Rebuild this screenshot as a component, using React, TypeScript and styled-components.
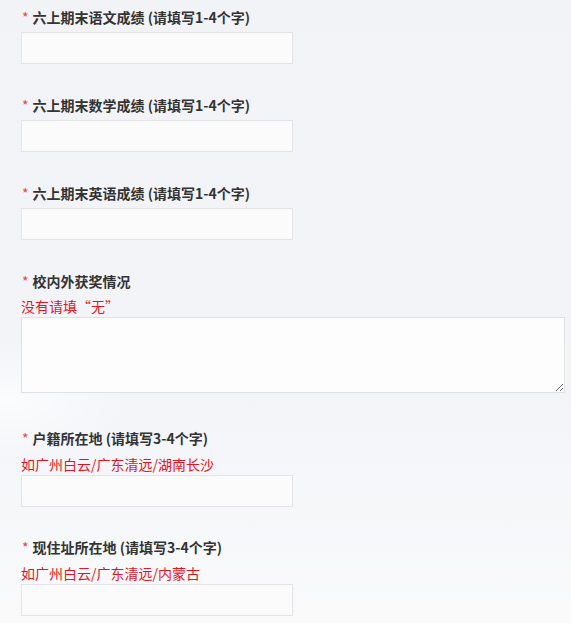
import React from "react";
import styled, { createGlobalStyle } from "styled-components";

const Global = createGlobalStyle`
  html, body { margin: 0; padding: 0; }
  body {
    font-family: "Noto Sans CJK SC", "Noto Sans", sans-serif;
    background: #f2f4f8;
  }
`;

const Page = styled.div`
  min-height: 623px;
  box-sizing: border-box;
  padding: 7px 0 20px 21px;
  background:
    radial-gradient(ellipse 120px 60px at 10px 400px, rgba(255,255,255,0.7), rgba(255,255,255,0) 100%),
    linear-gradient(180deg, #f1f3f7 0%, #f2f4f8 60%, #f7f8fa 85%, #fafafb 100%);
`;

const Field = styled.div<{ $gap: number }>`
  display: flex;
  flex-direction: column;
  align-items: flex-start;
  margin-bottom: ${(p) => p.$gap}px;
`;

const Label = styled.div<{ $mb: number }>`
  font-size: 14px;
  line-height: 20px;
  font-weight: 700;
  color: #333;
  margin-bottom: ${(p) => p.$mb}px;
  white-space: nowrap;
`;

const Star = styled.span`
  color: #e2474c;
  font-weight: 400;
  margin-right: 4px;
  margin-left: 1px;
`;

const Hint = styled.div`
  font-size: 14px;
  line-height: 22px;
  color: #e3141f;
  white-space: nowrap;
`;

const Input = styled.input`
  display: block;
  box-sizing: border-box;
  width: 272px;
  height: 32px;
  margin: 0;
  border: 1px solid #e4e4e6;
  background: #fbfbfc;
  outline: none;
  padding: 0 8px;
  font: inherit;
`;

const TextArea = styled.textarea`
  display: block;
  box-sizing: border-box;
  width: 544px;
  height: 76px;
  margin: 0;
  border: 1px solid #e1e1e3;
  background: #fdfdfd;
  outline: none;
  padding: 6px 8px;
  font: inherit;
`;

type F = {
  label: string;
  hint?: string;
  area?: boolean;
  mb: number;
  gap: number;
};

const fields: F[] = [
  { label: "六上期末语文成绩 (请填写1-4个字)", mb: 5, gap: 31 },
  { label: "六上期末数学成绩 (请填写1-4个字)", mb: 5, gap: 31 },
  { label: "六上期末英语成绩 (请填写1-4个字)", mb: 5, gap: 31 },
  { label: "校内外获奖情况", hint: "没有请填“无”", area: true, mb: 4, gap: 35 },
  { label: "户籍所在地 (请填写3-4个字)", hint: "如广州白云/广东清远/湖南长沙", mb: 5, gap: 30 },
  { label: "现住址所在地 (请填写3-4个字)", hint: "如广州白云/广东清远/内蒙古", mb: 5, gap: 0 },
];

export default function App() {
  return (
    <>
      <Global />
      <Page>
        {fields.map((f, i) => (
          <Field key={i} $gap={f.gap}>
            <Label $mb={f.mb}>
              <Star>*</Star>
              {f.label}
            </Label>
            {f.hint && <Hint>{f.hint}</Hint>}
            {f.area ? <TextArea /> : <Input />}
          </Field>
        ))}
      </Page>
    </>
  );
}
